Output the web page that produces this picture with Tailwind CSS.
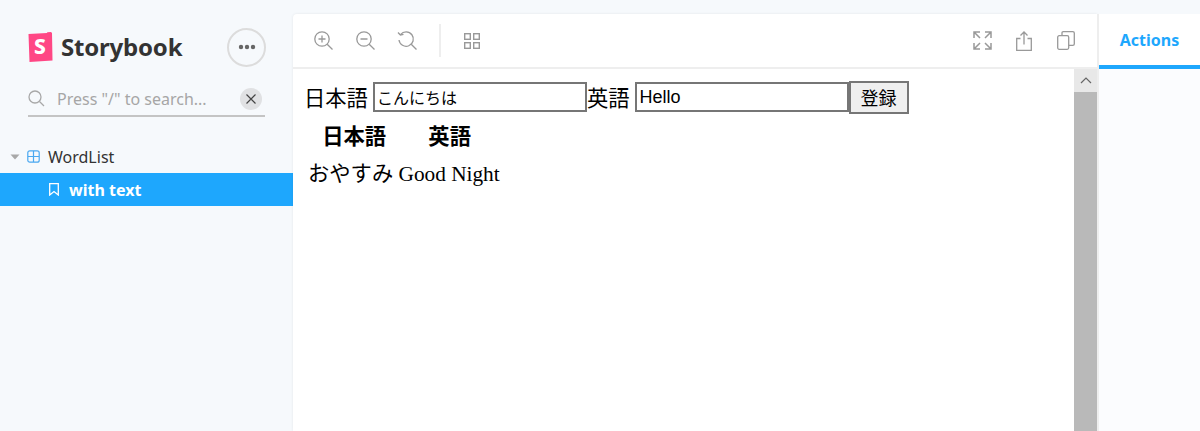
<!DOCTYPE html>
<html lang="ja">
<head>
<meta charset="utf-8">
<script src="https://cdn.jsdelivr.net/npm/@tailwindcss/browser@4"></script>
</head>
<body class="m-0 overflow-hidden">
<div class="flex w-[1200px] h-[431px] overflow-hidden bg-[#f6f9fc] font-['Noto_Sans',sans-serif] text-[#333]">
  <aside class="w-[293px] shrink-0 flex flex-col">
    <div class="flex items-center h-[38px] mt-[28px] pl-[28px] pr-[28px]">
      <svg width="25" height="30" viewBox="0 0 25 30" class="shrink-0"><path d="M0.5 2 L19 1 L19.3 0.2 L23 0 L24 1 L24.5 28.5 L1.5 30 Z" fill="#ff4785"/><text x="12" y="22" text-anchor="middle" font-size="21" font-weight="800" fill="#fff" font-family="'Noto Sans',sans-serif">S</text></svg>
      <span class="ml-[8px] text-[24px] font-bold leading-none tracking-[-0.2px] text-[#333]">Storybook</span>
      <div class="ml-auto w-[39px] h-[39px] rounded-full border-2 border-[#dcdcdc] flex items-center justify-center -mr-[1px]">
        <svg width="18" height="6" viewBox="0 0 18 6"><circle cx="3" cy="3" r="2.2" fill="#666"/><circle cx="9" cy="3" r="2.2" fill="#666"/><circle cx="15" cy="3" r="2.2" fill="#666"/></svg>
      </div>
    </div>
    <div class="mx-[28px] mt-[16px] h-[35px] border-b-2 border-[#c4c4c4] flex items-center">
      <svg width="17" height="17" viewBox="0 0 17 17" fill="none" stroke="#a8a8a8" stroke-width="1.3" class="shrink-0"><circle cx="7" cy="7" r="6"/><path d="M11.5 11.5 L16 16"/></svg>
      <span class="ml-[12px] text-[16px] text-[#a6a6a6] leading-none">Press "/" to search...</span>
      <div class="ml-auto mr-[3px] w-[22px] h-[22px] rounded-full bg-[#e0e1e3] flex items-center justify-center">
        <svg width="10" height="10" viewBox="0 0 10 10" stroke="#444" stroke-width="1.2"><path d="M0.5 0.5 L9.5 9.5 M9.5 0.5 L0.5 9.5"/></svg>
      </div>
    </div>
    <div class="mt-[23px] h-[33px] flex items-center pl-[10px]">
      <svg width="10" height="6" viewBox="0 0 10 6"><path d="M0.5 0.5 L9.5 0.5 L5 5.5 Z" fill="#a8a8a8"/></svg>
      <svg width="13" height="13" viewBox="0 0 13 13" fill="none" stroke="#4aa8f0" stroke-width="1.2" class="ml-[7px]"><rect x="0.8" y="0.8" width="11.4" height="11.4" rx="2"/><path d="M6.5 1 V12 M1 6.5 H12"/></svg>
      <span class="ml-[8px] text-[16px] leading-none text-[#333]">WordList</span>
    </div>
    <div class="h-[33px] bg-[#1ea7fd] flex items-center pl-[49px] text-white">
      <svg width="10" height="13" viewBox="0 0 10 13" fill="none" stroke="#fff" stroke-width="1.3"><path d="M0.7 0.7 H9.3 V12 L5 8.6 L0.7 12 Z"/></svg>
      <span class="ml-[10px] text-[16px] font-bold leading-none">with text</span>
    </div>
  </aside>
  <main class="w-[804px] shrink-0 mt-[14px] bg-white rounded-tl-[4px] flex flex-col shadow-[0_0_3px_rgba(0,0,0,0.08)]">
    <div class="h-[55px] shrink-0 border-b-2 border-[#eeeeee] flex items-center pl-[21px] pr-[22px] text-[#999]">
      <svg width="19" height="19" viewBox="0 0 19 19" fill="none" stroke="#999" stroke-width="1.3"><circle cx="8" cy="8" r="7.2"/><path d="M13.2 13.2 L18.5 18.5 M8 4.5 V11.5 M4.5 8 H11.5"/></svg>
      <svg width="19" height="19" viewBox="0 0 19 19" fill="none" stroke="#999" stroke-width="1.3" class="ml-[23px]"><circle cx="8" cy="8" r="7.2"/><path d="M13.2 13.2 L18.5 18.5 M4.5 8 H11.5"/></svg>
      <svg width="20" height="19" viewBox="0 0 20 19" fill="none" stroke="#999" stroke-width="1.3" class="ml-[22px]"><path d="M3.5 3.6 A7.2 7.2 0 1 1 2 9"/><path d="M1 1.5 L3.4 4 L6.5 3.4"/><path d="M14.2 13.2 L19.5 18.5"/></svg>
      <div class="ml-[22px] w-[2px] h-[33px] bg-[#eeeeee]"></div>
      <svg width="16" height="16" viewBox="0 0 16 16" fill="none" stroke="#999" stroke-width="1.4" class="ml-[23px]"><rect x="0.7" y="0.7" width="5.6" height="5.6"/><rect x="9.7" y="0.7" width="5.6" height="5.6"/><rect x="0.7" y="9.7" width="5.6" height="5.6"/><rect x="9.7" y="9.7" width="5.6" height="5.6"/></svg>
      <svg width="19" height="19" viewBox="0 0 19 19" fill="none" stroke="#999" stroke-width="1.5" class="ml-auto"><path d="M1 7 V1 H7 M1 1 L7 7 M12 1 H18 V7 M18 1 L12 7 M1 12 V18 H7 M1 18 L7 12 M12 18 H18 V12 M18 18 L12 12"/></svg>
      <svg width="16" height="20" viewBox="0 0 16 20" fill="none" stroke="#999" stroke-width="1.3" class="ml-[24px]"><path d="M4.5 7.5 H0.7 V19.3 H15.3 V7.5 H11.5 M8 13.5 V1 M4.5 4.5 L8 1 L11.5 4.5"/></svg>
      <svg width="18" height="19" viewBox="0 0 18 19" fill="none" stroke="#999" stroke-width="1.3" class="ml-[25px]"><rect x="0.7" y="4.7" width="11" height="13.6" rx="1.5"/><path d="M5 4.5 V2 Q5 0.7 6.3 0.7 H15.8 Q17.3 0.7 17.3 2 V13 Q17.3 14.3 15.8 14.3 H11.7"/></svg>
    </div>
    <div class="flex flex-1 min-h-0">
      <div class="flex-1 min-w-0 font-['Liberation_Serif','Noto_Sans_CJK_JP',serif] text-[21.3px] text-black pl-[11px] pt-[11px]">
        <form class="flex items-center h-[34px]">
          <span class="font-['Noto_Sans_CJK_JP',sans-serif] leading-none">日本語</span>
          <div class="ml-[5px] w-[214px] h-[30px] border-2 border-[#767676] bg-white flex items-center pl-[2px] text-[16px] font-['Noto_Sans_CJK_JP',sans-serif]">こんにちは</div>
          <span class="font-['Noto_Sans_CJK_JP',sans-serif] leading-none">英語</span>
          <div class="ml-[5px] w-[214px] h-[30px] border-2 border-[#767676] bg-white flex items-center pl-[3px] text-[18px] font-['Liberation_Sans',sans-serif]">Hello</div>
          <div class="w-[60px] h-[33px] border-2 border-[#767676] bg-[#efefef] flex items-center justify-center text-[18px] font-['Noto_Sans_CJK_JP',sans-serif] leading-none">登録</div>
        </form>
        <table class="border-separate border-spacing-[2px] ml-[0px]">
          <thead>
            <tr class="font-['Noto_Sans_CJK_JP',sans-serif] font-bold">
              <th class="w-[95px] h-[37px] p-[1px] text-center font-bold leading-none">日本語</th>
              <th class="w-[95px] h-[37px] p-[1px] text-left pl-[24px] font-bold leading-none">英語</th>
            </tr>
          </thead>
          <tbody>
            <tr><td colspan="2" class="h-[37px] p-[1px] pl-[2px] whitespace-nowrap"><span class="font-['Noto_Sans_CJK_JP',sans-serif]">おやすみ</span> Good Night</td></tr>
          </tbody>
        </table>
      </div>
      <div class="w-[23px] shrink-0 flex flex-col bg-[#b9b9b9]">
        <div class="h-[23px] bg-[#e8e8e8] flex items-center justify-center">
          <svg width="12" height="7" viewBox="0 0 12 7" fill="none" stroke="#666" stroke-width="1.2"><path d="M1 6 L6 1 L11 6"/></svg>
        </div>
      </div>
    </div>
  </main>
  <aside class="flex-1 mt-[14px] bg-[#fbfcfe] flex flex-col border-l-2 border-[#eeeeee]">
    <div class="h-[55px] shrink-0 bg-white border-b-[4px] border-[#1ea7fd] flex items-center justify-center text-[16px] font-bold text-[#1ea7fd] w-full">Actions</div>
  </aside>
</div>
</body>
</html>
